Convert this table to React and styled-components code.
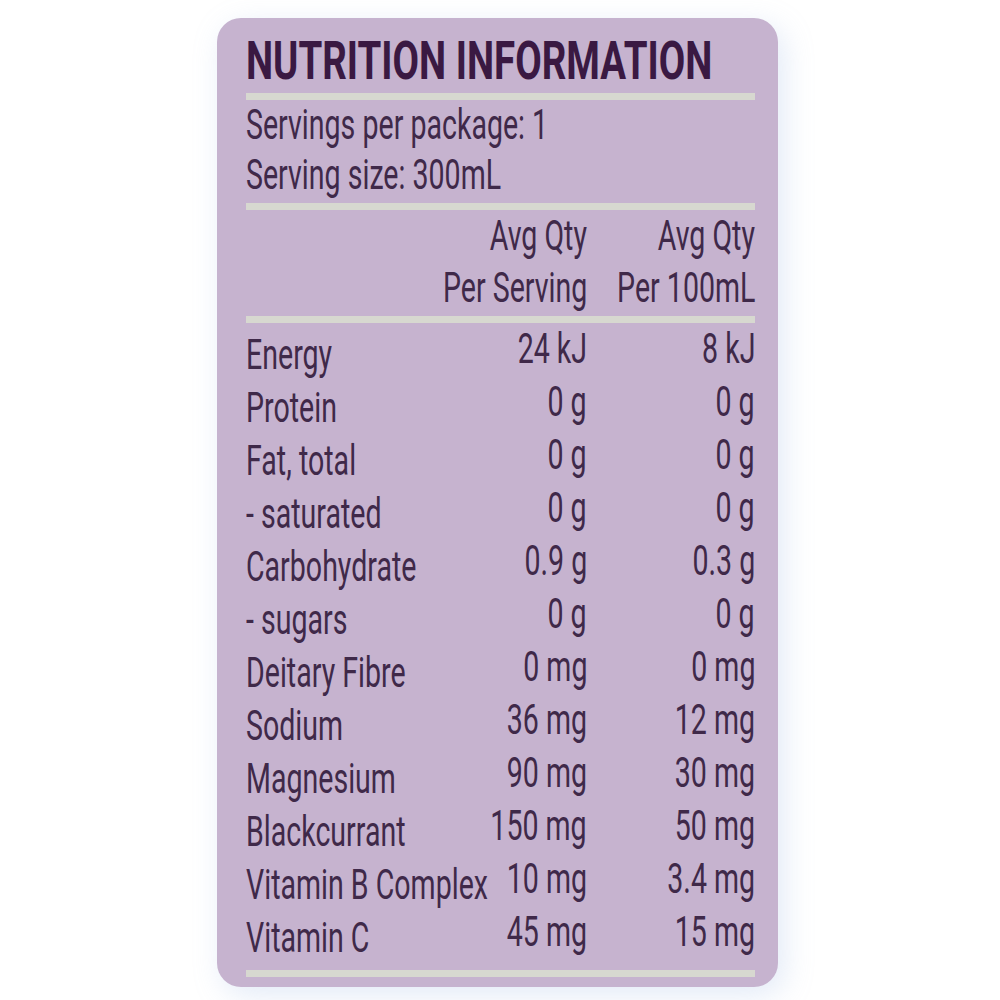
import React from 'react'
import styled, { createGlobalStyle } from 'styled-components'

const GlobalStyle = createGlobalStyle`
  html, body {
    margin: 0;
    padding: 0;
    background: #ffffff;
  }
  body {
    font-family: Roboto, 'Liberation Sans', sans-serif;
  }
`

const Page = styled.div`
  width: 1000px;
  height: 1000px;
  padding: 18px 0 0 217px;
  box-sizing: border-box;
`

const Card = styled.div`
  width: 561px;
  height: 969px;
  box-sizing: border-box;
  padding: 17px 23px 11px 29px;
  background: #c6b3cf;
  border-radius: 24px;
  box-shadow: 6px 8px 30px rgba(150, 180, 225, 0.28);
  color: #3f2949;
`

// the label face is a narrow DIN-like cut, so squeeze a regular face to fit
const Squeeze = styled.span`
  display: inline-block;
  white-space: nowrap;
  transform: scaleX(${(p) => p.$x || 0.68});
  transform-origin: ${(p) => (p.$right ? 'right' : 'left')} center;
`

const Title = styled.h1`
  margin: 0;
  font-family: Roboto, 'Liberation Sans', sans-serif;
  font-weight: 700;
  font-size: 53px;
  line-height: 53px;
  color: #3a1942;
  white-space: nowrap;
`

const Rule = styled.div`
  height: 7px;
  margin-top: ${(p) => p.$gap || 0}px;
  background: #d7d8d0;
`

const Servings = styled.div`
  font-size: 42px;
  line-height: 50px;
`

const Line = styled.div`
  white-space: nowrap;
`

const Table = styled.div`
  display: grid;
  grid-template-columns: 1fr 170px 168px;
  margin-top: ${(p) => p.$gap || 0}px;
  font-size: 42px;
`

const HeadCell = styled.div`
  grid-column: ${(p) => p.$col};
  display: flex;
  flex-direction: column;
  align-items: flex-end;
  line-height: 52px;
  min-width: 0;
`

const Label = styled.div`
  display: flex;
  line-height: 53px;
  min-width: 0;
`

const Value = styled.div`
  display: flex;
  justify-content: flex-end;
  align-self: start;
  line-height: 41px;
  min-width: 0;
`

const rows = [
  ['Energy', '24 kJ', '8 kJ'],
  ['Protein', '0 g', '0 g'],
  ['Fat, total', '0 g', '0 g'],
  ['- saturated', '0 g', '0 g'],
  ['Carbohydrate', '0.9 g', '0.3 g'],
  ['- sugars', '0 g', '0 g'],
  ['Deitary Fibre', '0 mg', '0 mg'],
  ['Sodium', '36 mg', '12 mg'],
  ['Magnesium', '90 mg', '30 mg'],
  ['Blackcurrant', '150 mg', '50 mg'],
  ['Vitamin B Complex', '10 mg', '3.4 mg'],
  ['Vitamin C', '45 mg', '15 mg'],
]

export default function App() {
  return (
    <>
      <GlobalStyle />
      <Page>
        <Card>
          <Title>
            <Squeeze $x={0.725}>NUTRITION INFORMATION</Squeeze>
          </Title>
          <Rule $gap={5} />
          <Servings>
            <Line>
              <Squeeze>Servings per package: 1</Squeeze>
            </Line>
            <Line>
              <Squeeze>Serving size: 300mL</Squeeze>
            </Line>
          </Servings>
          <Rule $gap={3} />
          <Table>
            <HeadCell $col={2}>
              <Squeeze $right>Avg Qty</Squeeze>
              <Squeeze $right>Per Serving</Squeeze>
            </HeadCell>
            <HeadCell $col={3}>
              <Squeeze $right>Avg Qty</Squeeze>
              <Squeeze $right>Per 100mL</Squeeze>
            </HeadCell>
          </Table>
          <Rule $gap={2} />
          <Table $gap={5}>
            {rows.map(([name, serving, per100]) => (
              <React.Fragment key={name}>
                <Label>
                  <Squeeze>{name}</Squeeze>
                </Label>
                <Value>
                  <Squeeze $right>{serving}</Squeeze>
                </Value>
                <Value>
                  <Squeeze $right>{per100}</Squeeze>
                </Value>
              </React.Fragment>
            ))}
          </Table>
          <Rule $gap={6} />
        </Card>
      </Page>
    </>
  )
}
